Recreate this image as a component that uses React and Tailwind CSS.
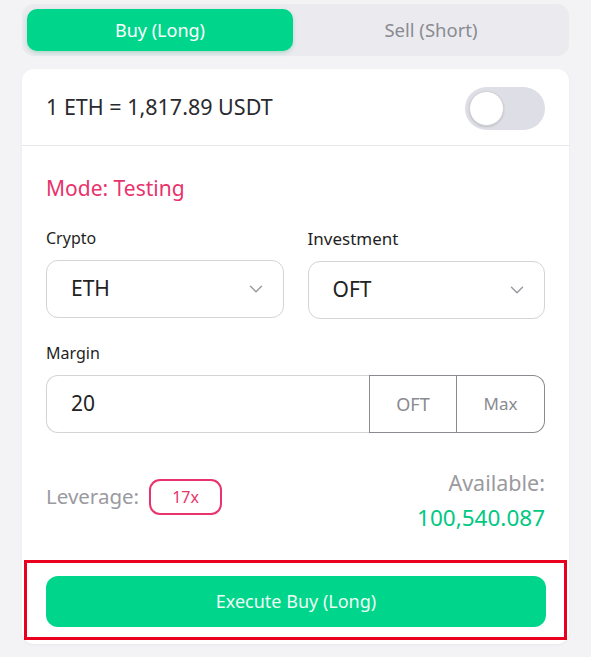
import { ChevronDown } from "lucide-react";

const Field = ({ label, value, labelSize }) => (
  <div className="flex flex-col">
    <span className={`${labelSize} text-[#1f1f24] leading-none mb-[14px]`}>{label}</span>
    <div className="flex items-center justify-between h-[58px] rounded-[12px] border border-[#d4d4d8] bg-white pl-6 pr-4">
      <span className="text-[21px] text-[#222]">{value}</span>
      <ChevronDown size={22} strokeWidth={1.6} className="text-[#9a9aa0]" />
    </div>
  </div>
);

export default function App() {
  return (
    <div
      className="min-h-[657px] w-[591px] bg-[#f3f3f5] pt-[4px]"
      style={{ fontFamily: '"Noto Sans", "Open Sans", sans-serif' }}
    >
      {/* side switch */}
      <div className="mx-[22px] flex gap-[5px] rounded-[12px] bg-[#ebebef] p-[5px]">
        <button className="flex-1 h-[42px] rounded-[10px] bg-[#00d68b] text-white text-[18px] shadow-[0_2px_4px_rgba(0,160,100,0.25)]">
          Buy (Long)
        </button>
        <button className="flex-1 h-[42px] rounded-[10px] text-[#8a8a92] text-[18.5px]">
          Sell (Short)
        </button>
      </div>

      <div className="mx-[22px] mt-[13px] rounded-[12px] bg-white shadow-[0_1px_3px_rgba(0,0,0,0.05)] pb-[4px]">
        {/* price row */}
        <div className="flex items-center justify-between h-[77px] px-6 border-b border-[#e6e6ea]">
          <span className="text-[21.5px] text-[#2a2a2e]">1 ETH = 1,817.89 USDT</span>
          <div className="flex items-center w-[80px] h-[43px] rounded-full bg-[#dedee6] px-[4px] mt-[2px]">
            <div className="w-[35px] h-[35px] rounded-full bg-white border border-[#d0d0d6] shadow-[0_1px_2px_rgba(0,0,0,0.15)]" />
          </div>
        </div>

        <div className="px-6 pt-[32px] pb-[31px]">
          <div className="text-[21px] leading-none text-[#e8336c]">Mode: Testing</div>

          <div className="grid grid-cols-2 gap-6 mt-[31px]">
            <Field label="Crypto" value="ETH" labelSize="text-[16px]" />
            <Field label="Investment" value="OFT" labelSize="text-[17px]" />
          </div>

          <div className="mt-[26px] text-[16px] text-[#1f1f24] leading-none mb-[14px]">Margin</div>
          <div className="flex h-[58px]">
            <div className="flex-1 flex items-center pl-6 rounded-l-[12px] border border-r-0 border-[#d4d4d8] text-[21px] text-[#222]">
              20
            </div>
            <div className="w-[88px] flex items-center justify-center border border-[#8a8a90] text-[18px] text-[#8a8a90]">
              OFT
            </div>
            <div className="w-[88px] flex items-center justify-center border border-l-0 border-[#8a8a90] rounded-r-[12px] text-[17px] text-[#8a8a90]">
              Max
            </div>
          </div>

          <div className="flex items-center justify-between mt-[39px]">
            <div className="flex items-center gap-[10px] mb-[8px]">
              <span className="text-[20.5px] text-[#9a9aa0]">Leverage:</span>
              <span className="w-[73px] h-[36px] flex items-center justify-center rounded-[11px] border-2 border-[#e8336c] text-[16px] text-[#e8336c]">
                17x
              </span>
            </div>
            <div className="flex flex-col items-end leading-none">
              <span className="text-[21.5px] text-[#9a9aa0]">Available:</span>
              <span className="text-[22.5px] text-[#00c882] mt-[13px]">100,540.087</span>
            </div>
          </div>
        </div>

        {/* execute */}
        <div className="mx-[2px] border-[3px] border-[#e8001c] pl-[19px] pr-[18px] pt-[13px] pb-[10px]">
          <button className="w-full h-[51px] rounded-[12px] bg-[#00d68b] text-[#eefcf6] text-[18px]">
            Execute Buy (Long)
          </button>
        </div>
      </div>
    </div>
  );
}
